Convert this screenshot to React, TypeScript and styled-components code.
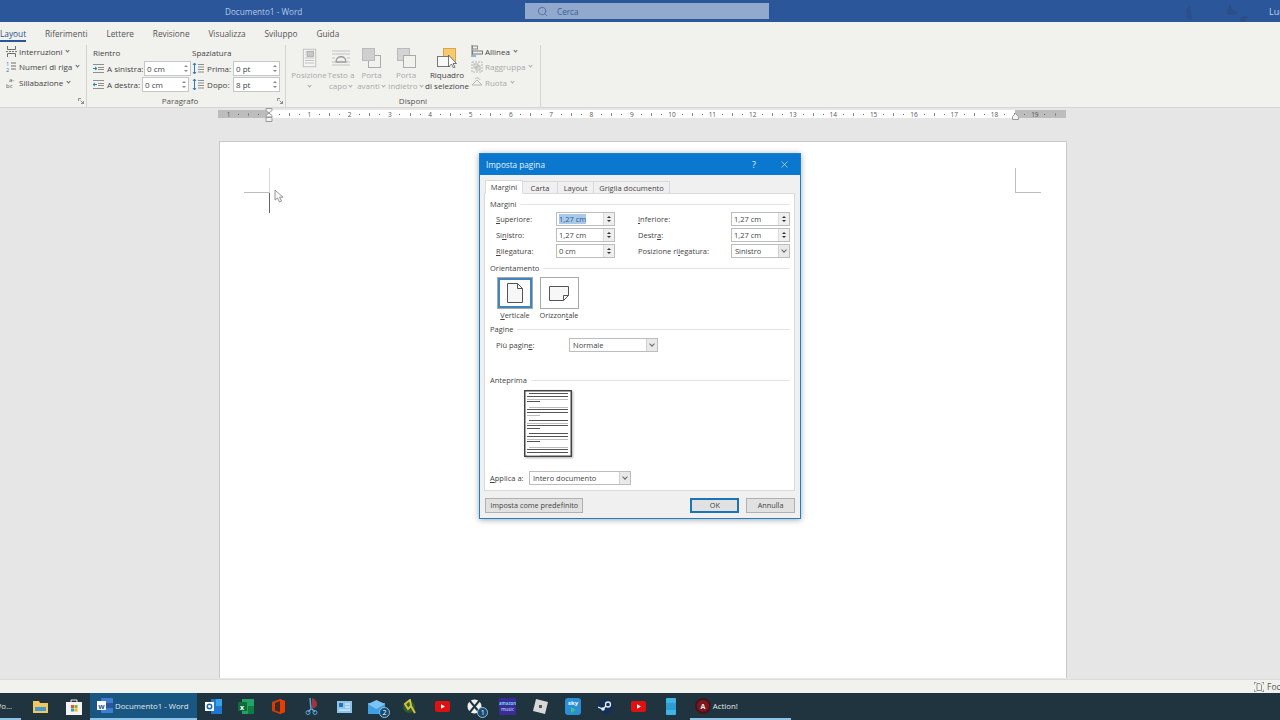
import React from "react";
import styled, { createGlobalStyle } from "styled-components";
import { Search, X } from "lucide-react";

const GlobalStyle = createGlobalStyle`
  html, body { margin: 0; padding: 0; background: #e6e6e6; }
  * { box-sizing: border-box; }
  body { font-family: "Open Sans", "Liberation Sans", sans-serif; }
`;

const Screen = styled.div`
  position: relative;
  width: 1280px;
  height: 720px;
  overflow: hidden;
  display: flex;
  flex-direction: column;
  color: #444;
`;

/* title bar */
const TitleBar = styled.div`
  height: 22px;
  flex: none;
  background: #2b579a;
  display: grid;
  grid-template-columns: 225px 300px 244px 1fr;
  align-items: center;
  color: #b4c8e4;
  font-size: 8.2px;
  white-space: nowrap;
  overflow: hidden;
`;

const DocTitle = styled.div`
  grid-column: 2;
`;

const SearchBox = styled.div`
  grid-column: 3;
  height: 16px;
  background: #90a9cd;
  color: #3d5f93;
  display: flex;
  align-items: center;
  gap: 9px;
  padding-left: 12px;
`;

const TitleRight = styled.div`
  grid-column: 4;
  padding-left: 500px;
  color: #bcd0ea;
  font-size: 9px;
`;

const Birds = styled.svg`
  position: absolute;
  left: 1180px;
  top: 2px;
`;

/* ribbon */
const TabBar = styled.div`
  height: 21px;
  flex: none;
  background: #f1f1ee;
  display: flex;
  gap: 18.8px;
  padding-top: 5px;
  font-size: 8.3px;
  color: #555;
`;

const RibbonTab = styled.div<{ $active?: boolean }>`
  height: 13px;
  line-height: 13px;
  color: ${p => (p.$active ? "#2b4f86" : "#555")};
  border-bottom: ${p => (p.$active ? "2px solid #2b579a" : "none")};
  box-sizing: content-box;
`;

const Ribbon = styled.div`
  height: 65px;
  flex: none;
  background: #f1f1ee;
  border-bottom: 1px solid #d6d6d4;
  box-shadow: 0 1px 1px #d8d8d8;
  display: flex;
  font-size: 8px;
`;

const Group = styled.div<{ $w: number }>`
  width: ${p => p.$w}px;
  flex: none;
  margin-top: 2px;
  border-right: 1px solid #d4d4d1;
  display: flex;
  flex-direction: column;
`;

const GroupBody = styled.div<{ $pad?: number }>`
  flex: 1;
  display: flex;
  min-height: 0;
  padding-left: ${p => p.$pad ?? 0}px;
`;

const GroupLabel = styled.div<{ $shift?: number }>`
  position: relative;
  height: 13px;
  line-height: 14px;
  text-align: center;
  padding-right: ${p => p.$shift ?? 0}px;
  color: #555;
`;

const Launcher = styled.svg`
  position: absolute;
  right: 2px;
  top: 4px;
`;

const SmallStack = styled.div<{ $left: number }>`
  display: flex;
  flex-direction: column;
  gap: 3.5px;
  padding-left: ${p => p.$left}px;
`;

const SmallCmd = styled.div<{ $disabled?: boolean }>`
  height: 12px;
  display: flex;
  align-items: center;
  gap: 2px;
  white-space: nowrap;
  color: ${p => (p.$disabled ? "#aaa" : "#444")};
`;

const Caret = styled.span<{ $disabled?: boolean }>`
  display: inline-block;
  width: 3px;
  height: 3px;
  margin: 0 1px 2px 2px;
  border-right: 1px solid ${p => (p.$disabled ? "#aaa" : "#666")};
  border-bottom: 1px solid ${p => (p.$disabled ? "#aaa" : "#666")};
  transform: rotate(45deg);
`;

const ParaColumn = styled.div<{ $w: number; $pad: number }>`
  width: ${p => p.$w}px;
  flex: none;
  padding-left: ${p => p.$pad}px;
`;

const ParaHead = styled.div`
  height: 15px;
  line-height: 15px;
`;

const ParaRow = styled.div`
  height: 16px;
  display: flex;
  align-items: center;
  white-space: nowrap;
`;

const ParaLabel = styled.span<{ $w: number }>`
  width: ${p => p.$w}px;
  flex: none;
  margin-left: 1px;
`;

const RibbonInput = styled.div`
  width: 47px;
  height: 15px;
  background: #fff;
  border: 1px solid #c6c6c6;
  padding-left: 2px;
  line-height: 13px;
  display: flex;
  justify-content: space-between;
  align-items: center;
  color: #444;
`;

const MiniSpin = styled.div`
  width: 8px;
  font-size: 0;
  display: flex;
  flex-direction: column;
  gap: 3px;
  align-items: center;
`;

const MiniArrow = styled.span<{ $up?: boolean; $dark?: boolean }>`
  width: 0;
  height: 0;
  border-left: 2px solid transparent;
  border-right: 2px solid transparent;
  ${p => (p.$up ? "border-bottom" : "border-top")}: 2px solid ${p => (p.$dark ? "#333" : "#8a8a8a")};
`;

const BigButton = styled.div<{ $w: number; $disabled?: boolean }>`
  width: ${p => p.$w}px;
  flex: none;
  display: flex;
  flex-direction: column;
  align-items: center;
  padding-top: 3px;
  color: ${p => (p.$disabled ? "#aaa" : "#444")};
`;

const BigLabel = styled.div`
  text-align: center;
  line-height: 11px;
  white-space: nowrap;
`;

const BigIcon = styled.svg`
  flex: none;
  margin-bottom: 0.5px;
`;

/* ruler */
const RulerBand = styled.div`
  height: 12px;
  flex: none;
  background: #e6e6e6;
  padding: 2px 0 2px 218px;
`;

const Ruler = styled.div`
  width: 848px;
  height: 8px;
  padding-left: 5.6px;
  display: flex;
  align-items: center;
  overflow: hidden;
  color: #555;
  font-size: 6.5px;
  background: linear-gradient(to right, #bdbdbd 51px, #fff 51px, #fff 797px, #bdbdbd 797px);
`;

const RulerSlot = styled.span`
  width: 10.09px;
  flex: none;
  display: flex;
  justify-content: center;
  align-items: center;
`;

const RulerDot = styled.i`
  width: 1px;
  height: 1px;
  background: #666;
`;

const RulerTick = styled.i`
  width: 1px;
  height: 3px;
  background: #888;
`;

const RulerMarker = styled.svg<{ $x: number; $y: number }>`
  position: absolute;
  left: ${p => p.$x}px;
  top: ${p => p.$y}px;
`;

/* document */
const DocArea = styled.div`
  flex: 1;
  min-height: 0;
  background: #e6e6e6;
  padding: 21px 0 1px 219px;
  display: flex;
`;

const Page = styled.div`
  position: relative;
  width: 848px;
  background: #fff;
  border: 1px solid #c9c9c9;
  border-bottom: none;
`;

const CropMark = styled.i<{ $x: number; $y: number; $w: number; $h: number; $c: string }>`
  position: absolute;
  left: ${p => p.$x}px;
  top: ${p => p.$y}px;
  width: ${p => p.$w}px;
  height: ${p => p.$h}px;
  background: ${p => p.$c};
`;

const MouseArrow = styled.svg`
  position: absolute;
  left: 54px;
  top: 47px;
`;

const StatusBar = styled.div`
  height: 14px;
  flex: none;
  background: #f1f1ee;
  border-top: 1px solid #dcdcda;
  padding-left: 1254px;
  display: flex;
  align-items: center;
  gap: 3px;
  font-size: 8.5px;
  color: #555;
  white-space: nowrap;
  overflow: hidden;
`;

/* taskbar */
const Taskbar = styled.div`
  height: 27px;
  flex: none;
  background: #20343f;
  display: flex;
  color: #e4e9ec;
  font-size: 7.8px;
  white-space: nowrap;
`;

const TaskButton = styled.div<{ $w: number; $open?: boolean; $active?: boolean; $left?: number; $after?: number; $before?: number }>`
  position: relative;
  width: ${p => p.$w}px;
  height: 27px;
  flex: none;
  margin-left: ${p => p.$before ?? 0}px;
  margin-right: ${p => p.$after ?? 0}px;
  padding-left: ${p => p.$left ?? 0}px;
  display: flex;
  align-items: center;
  justify-content: ${p => (p.$left === undefined ? "center" : "flex-start")};
  gap: 2px;
  overflow: ${p => (p.$after ? "hidden" : "visible")};
  background: ${p => (p.$active ? "#195682" : "transparent")};
  border-bottom: ${p => (p.$open ? "2px solid #8fc3e6" : "none")};
`;

const ClippedName = styled.span`
  margin-left: -6px;
`;

const Badge = styled.span`
  position: absolute;
  right: 3px;
  bottom: 2px;
  width: 11px;
  height: 11px;
  border-radius: 50%;
  background: #1a4a6d;
  border: 1px solid #8fc3e6;
  color: #fff;
  font-size: 7px;
  line-height: 9px;
  text-align: center;
`;

/* dialog */
const Dialog = styled.div`
  position: absolute;
  left: 479px;
  top: 153px;
  width: 322px;
  height: 366px;
  background: #f0f0f0;
  border: 1px solid #1b7fc9;
  box-shadow: 0 1px 6px rgba(0, 0, 0, 0.35);
  display: flex;
  flex-direction: column;
  font-size: 7.5px;
  color: #444;
`;

const DialogTitle = styled.div`
  height: 21px;
  flex: none;
  background: #0a78cf;
  color: #e9f3fb;
  display: flex;
  align-items: center;
  padding: 0 10px 0 6px;
  font-size: 8.2px;
`;

const TitleText = styled.span`
  flex: 1;
`;

const HelpMark = styled.span`
  width: 27px;
  font-size: 9px;
`;

const DialogBody = styled.div`
  flex: 1;
  display: flex;
  flex-direction: column;
  padding: 5px 5px 5px 4px;
`;

const TabStrip = styled.div`
  height: 14px;
  flex: none;
  display: flex;
  align-items: flex-end;
  padding-left: 1px;
  position: relative;
  z-index: 1;
`;

const DialogTab = styled.div<{ $w: number; $active?: boolean }>`
  width: ${p => p.$w}px;
  height: ${p => (p.$active ? 14 : 13)}px;
  text-align: center;
  line-height: 12px;
  background: ${p => (p.$active ? "#fff" : "#f0f0f0")};
  border: 1px solid #d9d9d9;
  border-left: ${p => (p.$active ? "1px solid #d9d9d9" : "none")};
  border-bottom: ${p => (p.$active ? "1px solid #fff" : "1px solid #d9d9d9")};
`;

const Panel = styled.div`
  height: 298px;
  flex: none;
  margin-top: -1px;
  background: #fff;
  border: 1px solid #d9d9d9;
  padding: 4px 4px 0 5px;
`;

const SectionHead = styled.div<{ $top?: number }>`
  height: 12px;
  margin-top: ${p => p.$top ?? 0}px;
  display: flex;
  align-items: center;
  gap: 4px;
  white-space: nowrap;
  &::after {
    content: "";
    flex: 1;
    height: 1px;
    background: #e4e4e4;
  }
`;

const MarginGrid = styled.div`
  display: grid;
  grid-template-columns: 60px 59px 116px 59px;
  grid-auto-rows: 16px;
  padding-left: 6px;
  margin-top: 1px;
  align-items: center;
`;

const RightLabel = styled.span`
  margin-left: 23px;
`;

const Spinner = styled.div`
  height: 14px;
  background: #fff;
  border: 1px solid #bdbdbd;
  display: flex;
  align-items: center;
  padding-left: 2px;
  line-height: 12px;
`;

const SpinValue = styled.span<{ $selected?: boolean }>`
  flex: 1;
  & > b {
    font-weight: 400;
    background: ${p => (p.$selected ? "#a8c9ea" : "transparent")};
    color: ${p => (p.$selected ? "#2f5a88" : "inherit")};
  }
`;

const SpinButtons = styled.div`
  width: 11px;
  height: 12px;
  border-left: 1px solid #dcdcdc;
  background: #efefef;
  display: flex;
  flex-direction: column;
  align-items: center;
  justify-content: center;
  gap: 2px;
`;

const Select = styled.div<{ $w?: number }>`
  width: ${p => (p.$w ? `${p.$w}px` : "auto")};
  height: 14px;
  flex: none;
  background: #fff;
  border: 1px solid #bdbdbd;
  display: flex;
  align-items: center;
  padding-left: 3px;
  line-height: 12px;
`;

const SelectText = styled.span`
  flex: 1;
`;

const SelectArrow = styled.div`
  width: 11px;
  height: 12px;
  background: #e9e9e9;
  border-left: 1px solid #d0d0d0;
  display: flex;
  align-items: center;
  justify-content: center;
  &::after {
    content: "";
    width: 3px;
    height: 3px;
    margin-bottom: 2px;
    border-right: 1px solid #666;
    border-bottom: 1px solid #666;
    transform: rotate(45deg);
  }
`;

const OrientRow = styled.div`
  display: flex;
  padding-left: 4px;
  margin-top: 3px;
  font-size: 7.3px;
`;

const OrientOption = styled.div<{ $w: number }>`
  width: ${p => p.$w}px;
  display: flex;
  flex-direction: column;
  align-items: center;
  line-height: 11px;
  gap: 1px;
`;

const OrientButton = styled.div<{ $selected?: boolean }>`
  width: ${p => (p.$selected ? 36 : 39)}px;
  height: 32px;
  background: #fff;
  border: 1px solid #a8a8a8;
  outline: ${p => (p.$selected ? "2px solid #3d86c0" : "none")};
  outline-offset: -3px;
  display: flex;
  align-items: center;
  justify-content: center;
`;

const FieldRow = styled.div<{ $top: number; $left: number; $labelW: number }>`
  display: flex;
  align-items: center;
  margin-top: ${p => p.$top}px;
  padding-left: ${p => p.$left}px;
  & > span:first-child {
    width: ${p => p.$labelW}px;
    flex: none;
  }
`;

const PreviewWrap = styled.div`
  padding-left: 34px;
  margin-top: 4px;
  height: 67px;
`;

const PreviewSheet = styled.svg`
  display: block;
  filter: drop-shadow(1px 1px 1px rgba(0, 0, 0, 0.3));
`;

const DialogFooter = styled.div`
  flex: 1;
  display: flex;
  align-items: flex-start;
  padding-left: 1px;
  padding-top: 7px;
  font-size: 7.3px;
`;

const DlgButton = styled.div<{ $w: number; $primary?: boolean; $left?: number }>`
  width: ${p => p.$w}px;
  height: 15px;
  margin-left: ${p => p.$left ?? 0}px;
  background: #e1e1e1;
  border: 1px solid ${p => (p.$primary ? "#1b74b5" : "#b0b0b0")};
  box-shadow: ${p => (p.$primary ? "inset 0 0 0 1px #1b74b5" : "none")};
  text-align: center;
  line-height: 13px;
  white-space: nowrap;
`;

/* small drawings */
const RowIcon = ({ kind }: { kind: string }) => {
  const c = "#6e6e6e";
  const b = "#2b7cbf";
  return (
    <svg width="11" height="11" viewBox="0 0 11 11" style={{ flex: "none", overflow: "visible" }}>
      {kind === "break" && (
        <g stroke={c} fill="none">
          <path d="M1.5 0v3.5h8V0M1.5 11V7.5h8V11" />
          <path d="M0 5.5h11" stroke="#777" strokeDasharray="2 1" />
        </g>
      )}
      {kind === "lines" && (
        <g>
          <text x="0" y="5" fontSize="5.5" fill={b} fontFamily="Open Sans">1</text>
          <text x="0" y="11" fontSize="5.5" fill={b} fontFamily="Open Sans">2</text>
          <path d="M5 2h5M5 5h5M5 8h5" stroke={c} />
        </g>
      )}
      {kind === "hyphen" && (
        <g fontFamily="Open Sans" fontSize="6" fill="#555">
          <text x="3" y="5">a-</text>
          <text x="0" y="11">bc</text>
        </g>
      )}
    </svg>
  );
};

const IndentIcon = ({ right }: { right?: boolean }) => (
  <svg width="11" height="9" viewBox="0 0 11 9" style={{ flex: "none" }}>
    <path d="M0 .5h11M5 3.5h6M5 5.5h6M0 8.5h11" stroke="#777" strokeWidth=".8" />
    <path d={right ? "M4 4.5H0M2 3L0 4.5 2 6" : "M0 4.5h4M2 3l2 1.5L2 6"} stroke="#2b8a9f" fill="none" />
  </svg>
);

const SpacingIcon = () => (
  <svg width="12" height="11" viewBox="0 0 12 11" style={{ flex: "none" }}>
    <path d="M2.5 0v11M1 2l1.5-2L4 2M1 9l1.5 2L4 9" stroke="#2b7cbf" fill="none" />
    <path d="M6 1.5h6M6 4h6M6 6.5h6M6 9h6" stroke="#777" strokeWidth=".8" />
  </svg>
);

const AlignIcon = ({ kind }: { kind: string }) => (
  <svg width="12" height="12" viewBox="0 0 12 12" style={{ flex: "none" }}>
    {kind === "align" && (
      <g fill="none">
        <path d="M1 0v12" stroke="#777" />
        <rect x="1.5" y="1" width="5" height="3" stroke="#888" />
        <rect x="1.5" y="6" width="10" height="3" stroke="#777" fill="#eee" />
        <path d="M2 11h3" stroke="#2b7cbf" />
      </g>
    )}
    {kind === "group" && (
      <g fill="none" stroke="#b5b5b5">
        <rect x="1" y="1" width="10" height="10" strokeDasharray="2 1" />
        <rect x="3" y="3" width="4" height="4" />
        <rect x="5" y="5" width="4" height="4" />
      </g>
    )}
    {kind === "rotate" && (
      <g fill="none" stroke="#b5b5b5">
        <path d="M1 9l5-5 5 5zM4 3c2-2 4-1 5 1" />
      </g>
    )}
  </svg>
);

const PositionIcon = () => (
  <BigIcon width="15" height="20" viewBox="0 0 18 24">
    <rect x="1.500" y="1.500" width="15" height="21" fill="#f4f4f2" stroke="#b8b8b8" />
    <rect x="6" y="4" width="8" height="6" fill="#c8c8c8" stroke="#a8a8a8" />
    <path d="M3.500 5h1M3.500 8h1M3.500 12h11M3.500 15h11M3.500 18h11" stroke="#bbb" />
  </BigIcon>
);

const WrapIcon = () => (
  <BigIcon width="20" height="20" viewBox="0 0 20 20">
    <path d="M1 3h18M1 6h18M1 17h18M1 14h3M16 14h3M1 10h3M16 10h3" stroke="#c3c3c3" />
    <path d="M5 14c0-7 10-7 10 0z" fill="#f0f0ee" stroke="#999" strokeWidth="1.300" />
  </BigIcon>
);

const ForwardIcon = ({ back }: { back?: boolean }) => (
  <BigIcon width="19" height="20" viewBox="0 0 19 20">
    {back ? (
      <g>
        <rect x=".5" y=".5" width="12" height="12" fill="#d4d4d4" stroke="#bbb" />
        <rect x="6.500" y="7.500" width="12" height="12" fill="#f1f1ee" stroke="#aaa" />
      </g>
    ) : (
      <g>
        <rect x="6.500" y="7.500" width="12" height="12" fill="#f1f1ee" stroke="#aaa" />
        <rect x=".5" y=".5" width="12" height="12" fill="#cfcfcf" stroke="#bbb" />
      </g>
    )}
  </BigIcon>
);

const SelectionIcon = () => (
  <BigIcon width="20" height="20" viewBox="0 0 20 20">
    <rect x="6.500" y=".5" width="12" height="14" fill="#f6c970" stroke="#dca648" />
    <rect x=".5" y="8.500" width="12" height="10" fill="#f8f8f8" stroke="#777" />
    <path d="M11.500 7v12l3-3 2 4 1.500-.8-2-3.700h3.500z" fill="#fff" stroke="#555" strokeWidth=".8" />
  </BigIcon>
);

const CornerLauncher = () => (
  <Launcher width="6" height="6" viewBox="0 0 6 6">
    <path d="M.5 3V.5H3M2.500 2.500l3 3M3 5.500h2.500V3" stroke="#777" fill="none" strokeWidth=".8" />
  </Launcher>
);

const PortraitPage = () => (
  <svg width="16" height="20" viewBox="0 0 16 20">
    <path d="M.5.5h10l5 5v14H.5zM10.500.5v5h5" fill="#f7f7f7" stroke="#555" />
  </svg>
);

const LandscapePage = () => (
  <svg width="20" height="15" viewBox="0 0 20 15">
    <path d="M.5.5h19v9l-5 5H.5zM14.500 14.500v-5h5" fill="#f7f7f7" stroke="#555" />
  </svg>
);

// x1, x2, y, colore: righe del foglio di anteprima
const previewLines: [number, number, number, boolean][] = [
  [5, 44, 3, true], [3, 44, 6, true], [3, 44, 9, false], [3, 16, 11, true],
  [5, 44, 17, false], [3, 44, 19, true], [3, 44, 22, true], [3, 16, 25, false],
  [5, 44, 30, true], [3, 44, 33, false], [3, 44, 35, true], [3, 16, 38, true],
  [5, 44, 43, true], [3, 44, 46, true], [3, 44, 49, false], [3, 16, 51, true],
  [5, 44, 57, false], [3, 44, 59, true], [3, 44, 62, true], [3, 16, 65, false],
];

const PreviewPage = () => (
  <PreviewSheet width="48" height="67" viewBox="0 0 48 67">
    <rect x=".75" y=".75" width="46.500" height="65.500" fill="#fff" stroke="#444" strokeWidth="1.500" />
    {previewLines.map(([a, b, y, dark], i) => (
      <path key={i} d={`M${a} ${y + 0.5}H${b}`} stroke={dark ? "#555" : "#bbb"} />
    ))}
  </PreviewSheet>
);

const SpinField = ({ value, selected }: { value: string; selected?: boolean }) => (
  <Spinner>
    <SpinValue $selected={selected}><b>{value}</b></SpinValue>
    <SpinButtons>
      <MiniArrow $up $dark />
      <MiniArrow $dark />
    </SpinButtons>
  </Spinner>
);

const RibbonSpin = ({ value }: { value: string }) => (
  <RibbonInput>
    {value}
    <MiniSpin>
      <MiniArrow $up />
      <MiniArrow />
    </MiniSpin>
  </RibbonInput>
);

const TaskIcon = ({ name }: { name: string }) => {
  switch (name) {
    case "folder":
      return (
        <svg width="15" height="13" viewBox="0 0 15 13">
          <path d="M0 1h6l1 2h8v10H0z" fill="#f4c75a" />
          <rect x="2" y="7" width="11" height="4" fill="#3f9bd6" />
        </svg>
      );
    case "store":
      return (
        <svg width="16" height="17" viewBox="0 0 16 17">
          <path d="M5 5V2h6v3" fill="none" stroke="#eee" />
          <rect y="4" width="16" height="13" fill="#f3f3f3" />
          <rect x="5" y="7" width="3" height="3" fill="#e8542a" />
          <rect x="8.500" y="7" width="3" height="3" fill="#7ab82a" />
          <rect x="5" y="10.500" width="3" height="3" fill="#2a9ae0" />
          <rect x="8.500" y="10.500" width="3" height="3" fill="#f4b400" />
        </svg>
      );
    case "word":
      return (
        <svg width="16" height="15" viewBox="0 0 16 15">
          <rect x="4" width="12" height="15" rx="1" fill="#3f7fd0" />
          <rect x="4" y="5" width="12" height="5" fill="#2b579a" />
          <rect y="3" width="9" height="9" fill="#fff" />
          <text x="1.200" y="10.500" fontSize="7.500" fontWeight="700" fontFamily="Open Sans" fill="#2b579a">w</text>
        </svg>
      );
    case "outlook":
      return (
        <svg width="17" height="15" viewBox="0 0 17 15">
          <rect x="6" width="11" height="15" fill="#1f78d0" />
          <rect x="11" y="0" width="6" height="7" fill="#36a4e8" />
          <rect y="3" width="9" height="9" fill="#fff" />
          <circle cx="4.500" cy="7.500" r="2.200" fill="none" stroke="#1565b8" strokeWidth="1.500" />
        </svg>
      );
    case "excel":
      return (
        <svg width="16" height="15" viewBox="0 0 16 15">
          <rect x="4" width="12" height="15" fill="#21a366" />
          <rect x="10" y="7" width="6" height="8" fill="#107c41" />
          <rect y="3" width="9" height="9" fill="#0e6b3a" />
          <text x="2" y="10.500" fontSize="7" fontWeight="700" fontFamily="Open Sans" fill="#fff">x</text>
        </svg>
      );
    case "office":
      return (
        <svg width="13" height="15" viewBox="0 0 13 15">
          <path d="M0 3l8-3 5 2v11l-5 2-8-3z" fill="#d83b01" />
          <path d="M8 2v11l-5-1.500V4z" fill="#3a2a2a" />
          <path d="M8 0l5 2v11l-5 2z" fill="#eb3c00" />
        </svg>
      );
    case "snip":
      return (
        <svg width="13" height="17" viewBox="0 0 13 17">
          <path d="M7 0a6 6 0 0 1 4 9l-4 2z" fill="#a3343a" />
          <path d="M5 0l1 11-3 3M7 11l3 3" stroke="#5ea3dc" strokeWidth="1.500" fill="none" />
          <circle cx="3" cy="14.500" r="2" fill="none" stroke="#5ea3dc" />
          <circle cx="10" cy="14.500" r="2" fill="none" stroke="#5ea3dc" />
        </svg>
      );
    case "news":
      return (
        <svg width="15" height="12" viewBox="0 0 15 12">
          <rect width="15" height="12" fill="#8cc4ec" />
          <rect x="2" y="2" width="4" height="4" fill="#2a6fa8" />
          <path d="M8 3h5M8 6h5M2 9h11" stroke="#eef7fd" />
        </svg>
      );
    case "mail":
      return (
        <svg width="17" height="14" viewBox="0 0 17 14">
          <rect y="3" width="17" height="11" fill="#3f9fe2" />
          <path d="M0 4l8.500-4L17 4 8.500 9z" fill="#7cc4f3" />
        </svg>
      );
    case "globe":
      return (
        <svg width="15" height="15" viewBox="0 0 15 15">
          <circle cx="7" cy="8" r="6" fill="#2d5a2d" />
          <path d="M3 5l5-4 1 6-3 3zM9 7l4 7" stroke="#d8c23a" strokeWidth="2" fill="none" />
        </svg>
      );
    case "youtube":
      return (
        <svg width="15" height="11" viewBox="0 0 15 11">
          <rect width="15" height="11" rx="2" fill="#e01010" />
          <path d="M6 3.200v4.600l4-2.300z" fill="#fff" />
        </svg>
      );
    case "xbox":
      return (
        <svg width="15" height="15" viewBox="0 0 15 15">
          <circle cx="7.500" cy="7.500" r="7" fill="#f0f0f0" />
          <path d="M2.500 1.500l10 12M12.500 1.500l-10 12" stroke="#20343f" strokeWidth="2" />
        </svg>
      );
    case "amazon":
      return (
        <svg width="17" height="17" viewBox="0 0 17 17">
          <rect width="17" height="17" rx="1" fill="#3a2a9a" />
          <text x="8.500" y="7" textAnchor="middle" fontSize="4.300" fontWeight="700" fill="#6fd8e8" fontFamily="Open Sans">amazon</text>
          <text x="8.500" y="12.500" textAnchor="middle" fontSize="4.800" fill="#d8eef2" fontFamily="Open Sans">music</text>
        </svg>
      );
    case "roblox":
      return (
        <svg width="15" height="15" viewBox="0 0 15 15">
          <path d="M3 0l12 3-3 12L0 12z" fill="#d8d8d8" />
          <rect x="6" y="6" width="3" height="3" fill="#555" />
        </svg>
      );
    case "sky":
      return (
        <svg width="16" height="17" viewBox="0 0 16 17">
          <rect width="16" height="17" rx="3" fill="#2a8ed8" />
          <text x="8" y="7" textAnchor="middle" fontSize="6" fontWeight="700" fill="#fff" fontFamily="Open Sans">sky</text>
          <path d="M6 9v6l5-3z" fill="#3bc47a" />
        </svg>
      );
    case "steam":
      return (
        <svg width="15" height="15" viewBox="0 0 15 15">
          <circle cx="7.500" cy="7.500" r="7.500" fill="#12305a" />
          <circle cx="10" cy="5.500" r="2.500" fill="none" stroke="#e8eef4" strokeWidth="1.300" />
          <path d="M0 8l5 2 3-3" stroke="#e8eef4" strokeWidth="1.300" fill="none" />
          <circle cx="5" cy="10" r="1.800" fill="#e8eef4" />
        </svg>
      );
    case "tablet":
      return (
        <svg width="10" height="17" viewBox="0 0 10 17">
          <rect width="10" height="17" rx="1" fill="#3fb4e6" />
          <rect y="5" width="10" height="7" fill="#2e9ed0" />
        </svg>
      );
    default:
      return (
        <svg width="16" height="16" viewBox="0 0 16 16">
          <circle cx="8" cy="8" r="8" fill="#4a1218" />
          <circle cx="8" cy="8" r="6" fill="#7a1820" />
          <text x="8" y="10.500" textAnchor="middle" fontSize="7" fontWeight="700" fill="#eee" fontFamily="Open Sans">A</text>
        </svg>
      );
  }
};

const rulerSlots = Array.from({ length: 83 }, (_, i) => i - 4);

const RulerMark = ({ k }: { k: number }) => {
  if (k === 0) return <RulerSlot />;
  if (k % 4 === 0) return <RulerSlot>{Math.abs(k / 4)}</RulerSlot>;
  if (k % 2 === 0) return <RulerSlot><RulerTick /></RulerSlot>;
  return <RulerSlot><RulerDot /></RulerSlot>;
};

const taskIcons = ["outlook", "excel", "office", "snip", "news", "mail", "globe", "youtube", "xbox", "amazon", "roblox", "sky", "steam", "youtube", "tablet"];
const badges: Record<number, string> = { 5: "2", 8: "1" };

export default function App() {
  return (
    <Screen>
      <GlobalStyle />
      <TitleBar>
        <DocTitle>Documento1 - Word</DocTitle>
        <SearchBox>
          <Search size={11} strokeWidth={1.5} />
          Cerca
        </SearchBox>
        <TitleRight>Luca</TitleRight>
        <Birds width="70" height="20" viewBox="0 0 70 20">
          <path d="M6 8l4-4 1 6 1 8-5-2zM50 2l3 6 5 2-3 3-6 0-3-2zM60 16l6-3 2 3-3 4h-4z" fill="#2a4f8b" />
        </Birds>
      </TitleBar>

      <TabBar>
        <RibbonTab $active>Layout</RibbonTab>
        <RibbonTab>Riferimenti</RibbonTab>
        <RibbonTab>Lettere</RibbonTab>
        <RibbonTab>Revisione</RibbonTab>
        <RibbonTab>Visualizza</RibbonTab>
        <RibbonTab>Sviluppo</RibbonTab>
        <RibbonTab>Guida</RibbonTab>
      </TabBar>

      <Ribbon>
        <Group $w={87}>
          <GroupBody>
            <SmallStack $left={6}>
              <SmallCmd><RowIcon kind="break" />Interruzioni<Caret /></SmallCmd>
              <SmallCmd><RowIcon kind="lines" />Numeri di riga<Caret /></SmallCmd>
              <SmallCmd><RowIcon kind="hyphen" />Sillabazione<Caret /></SmallCmd>
            </SmallStack>
          </GroupBody>
          <GroupLabel><CornerLauncher /></GroupLabel>
        </Group>

        <Group $w={199}>
          <GroupBody>
            <ParaColumn $w={105} $pad={6}>
              <ParaHead>Rientro</ParaHead>
              <ParaRow><IndentIcon /><ParaLabel $w={39}>&nbsp;A sinistra:</ParaLabel><RibbonSpin value="0 cm" /></ParaRow>
              <ParaRow><IndentIcon right /><ParaLabel $w={37}>&nbsp;A destra:</ParaLabel><RibbonSpin value="0 cm" /></ParaRow>
            </ParaColumn>
            <ParaColumn $w={94} $pad={0}>
              <ParaHead>Spaziatura</ParaHead>
              <ParaRow><SpacingIcon /><ParaLabel $w={28}>&nbsp;Prima:</ParaLabel><RibbonSpin value="0 pt" /></ParaRow>
              <ParaRow><SpacingIcon /><ParaLabel $w={28}>&nbsp;Dopo:</ParaLabel><RibbonSpin value="8 pt" /></ParaRow>
            </ParaColumn>
          </GroupBody>
          <GroupLabel $shift={12}>Paragrafo<CornerLauncher /></GroupLabel>
        </Group>

        <Group $w={255}>
          <GroupBody $pad={6}>
            <BigButton $w={34} $disabled><PositionIcon /><BigLabel>Posizione<br /><Caret $disabled /></BigLabel></BigButton>
            <BigButton $w={30} $disabled><WrapIcon /><BigLabel>Testo a<br />capo<Caret $disabled /></BigLabel></BigButton>
            <BigButton $w={31} $disabled><ForwardIcon /><BigLabel>Porta<br />avanti<Caret $disabled /></BigLabel></BigButton>
            <BigButton $w={38} $disabled><ForwardIcon back /><BigLabel>Porta<br />indietro<Caret $disabled /></BigLabel></BigButton>
            <BigButton $w={44}><SelectionIcon /><BigLabel>Riquadro<br />di selezione</BigLabel></BigButton>
            <SmallStack $left={2}>
              <SmallCmd><AlignIcon kind="align" />Allinea<Caret /></SmallCmd>
              <SmallCmd $disabled><AlignIcon kind="group" />Raggruppa<Caret $disabled /></SmallCmd>
              <SmallCmd $disabled><AlignIcon kind="rotate" />Ruota<Caret $disabled /></SmallCmd>
            </SmallStack>
          </GroupBody>
          <GroupLabel>Disponi</GroupLabel>
        </Group>
      </Ribbon>

      <RulerBand>
        <Ruler>
          {rulerSlots.map(k => <RulerMark key={k} k={k} />)}
        </Ruler>
      </RulerBand>
      <RulerMarker $x={265} $y={108} width="8" height="14" viewBox="0 0 8 14">
        <path d="M1 .5h6v2L4 5 1 2.500zM4 5l3 2.500V9H1V7.500zM1 9.500h6v4H1z" fill="#f4f4f4" stroke="#9a9a9a" />
      </RulerMarker>
      <RulerMarker $x={1012} $y={113} width="7" height="7" viewBox="0 0 7 7">
        <path d="M3.500.5l3 3v3h-6v-3z" fill="#f4f4f4" stroke="#9a9a9a" />
      </RulerMarker>

      <DocArea>
        <Page>
          <CropMark $x={24} $y={50} $w={26} $h={1} $c="#bdbdbd" />
          <CropMark $x={49} $y={26} $w={1} $h={25} $c="#d6d6d6" />
          <CropMark $x={49} $y={51} $w={1} $h={20} $c="#666" />
          <CropMark $x={795} $y={26} $w={1} $h={25} $c="#bdbdbd" />
          <CropMark $x={795} $y={50} $w={26} $h={1} $c="#bdbdbd" />
          <MouseArrow width="10" height="14" viewBox="0 0 10 14">
            <path d="M1 1v10l2.500-2 2 4 2-1-2-3.800H9z" fill="#f8f8f8" stroke="#8a8a8a" strokeWidth=".9" />
          </MouseArrow>
        </Page>
      </DocArea>

      <StatusBar>
        <svg width="10" height="10" viewBox="0 0 10 10" style={{ flex: "none" }}>
          <path d="M0 2.500V0h2.500M7.500 0H10v2.500M10 7.500V10H7.500M2.500 10H0V7.500" stroke="#666" fill="none" />
          <path d="M3 1.500h3l1.500 1.500v5.500H3z" fill="none" stroke="#777" strokeWidth=".8" />
        </svg>
        Focus
      </StatusBar>

      <Taskbar>
        <TaskButton $w={21} $after={3} $left={0} $open><ClippedName>Wo...</ClippedName></TaskButton>
        <TaskButton $w={33}><TaskIcon name="folder" /></TaskButton>
        <TaskButton $w={33}><TaskIcon name="store" /></TaskButton>
        <TaskButton $w={107} $left={7} $open $active><TaskIcon name="word" />Documento1 - Word</TaskButton>
        {taskIcons.map((name, i) => (
          <TaskButton $w={32.7} key={i}>
            <TaskIcon name={name} />
            {badges[i] && <Badge>{badges[i]}</Badge>}
          </TaskButton>
        ))}
        <TaskButton $w={101} $before={2.5} $left={5} $open><TaskIcon name="action" />Action!</TaskButton>
      </Taskbar>

      <Dialog>
        <DialogTitle>
          <TitleText>Imposta pagina</TitleText>
          <HelpMark>?</HelpMark>
          <X size={11} strokeWidth={1.4} />
        </DialogTitle>
        <DialogBody>
          <TabStrip>
            <DialogTab $w={38} $active>Margini</DialogTab>
            <DialogTab $w={35}>Carta</DialogTab>
            <DialogTab $w={36}>Layout</DialogTab>
            <DialogTab $w={76}>Griglia documento</DialogTab>
          </TabStrip>
          <Panel>
            <SectionHead>Margini</SectionHead>
            <MarginGrid>
              <span><u>S</u>uperiore:</span>
              <SpinField value="1,27 cm" selected />
              <RightLabel><u>I</u>nferiore:</RightLabel>
              <SpinField value="1,27 cm" />
              <span>Si<u>n</u>istro:</span>
              <SpinField value="1,27 cm" />
              <RightLabel>Destr<u>a</u>:</RightLabel>
              <SpinField value="1,27 cm" />
              <span><u>R</u>ilegatura:</span>
              <SpinField value="0 cm" />
              <RightLabel>Posizione ri<u>l</u>egatura:</RightLabel>
              <Select><SelectText>Sinistro</SelectText><SelectArrow /></Select>
            </MarginGrid>
            <SectionHead $top={3}>Orientamento</SectionHead>
            <OrientRow>
              <OrientOption $w={42}>
                <OrientButton $selected><PortraitPage /></OrientButton>
                <span><u>V</u>erticale</span>
              </OrientOption>
              <OrientOption $w={46}>
                <OrientButton><LandscapePage /></OrientButton>
                <span>Orizzon<u>t</u>ale</span>
              </OrientOption>
            </OrientRow>
            <SectionHead $top={2}>Pagine</SectionHead>
            <FieldRow $top={3} $left={6} $labelW={73}>
              <span>Più pagin<u>e</u>:</span>
              <Select $w={89}><SelectText>Normale</SelectText><SelectArrow /></Select>
            </FieldRow>
            <SectionHead $top={22}>Anteprima</SectionHead>
            <PreviewWrap><PreviewPage /></PreviewWrap>
            <FieldRow $top={14} $left={0} $labelW={39}>
              <span><u>A</u>pplica a:</span>
              <Select $w={102}><SelectText>Intero documento</SelectText><SelectArrow /></Select>
            </FieldRow>
          </Panel>
          <DialogFooter>
            <DlgButton $w={99}>Imposta come predefinito</DlgButton>
            <DlgButton $w={49} $left={107} $primary>OK</DlgButton>
            <DlgButton $w={49} $left={7}>Annulla</DlgButton>
          </DialogFooter>
        </DialogBody>
      </Dialog>
    </Screen>
  );
}
